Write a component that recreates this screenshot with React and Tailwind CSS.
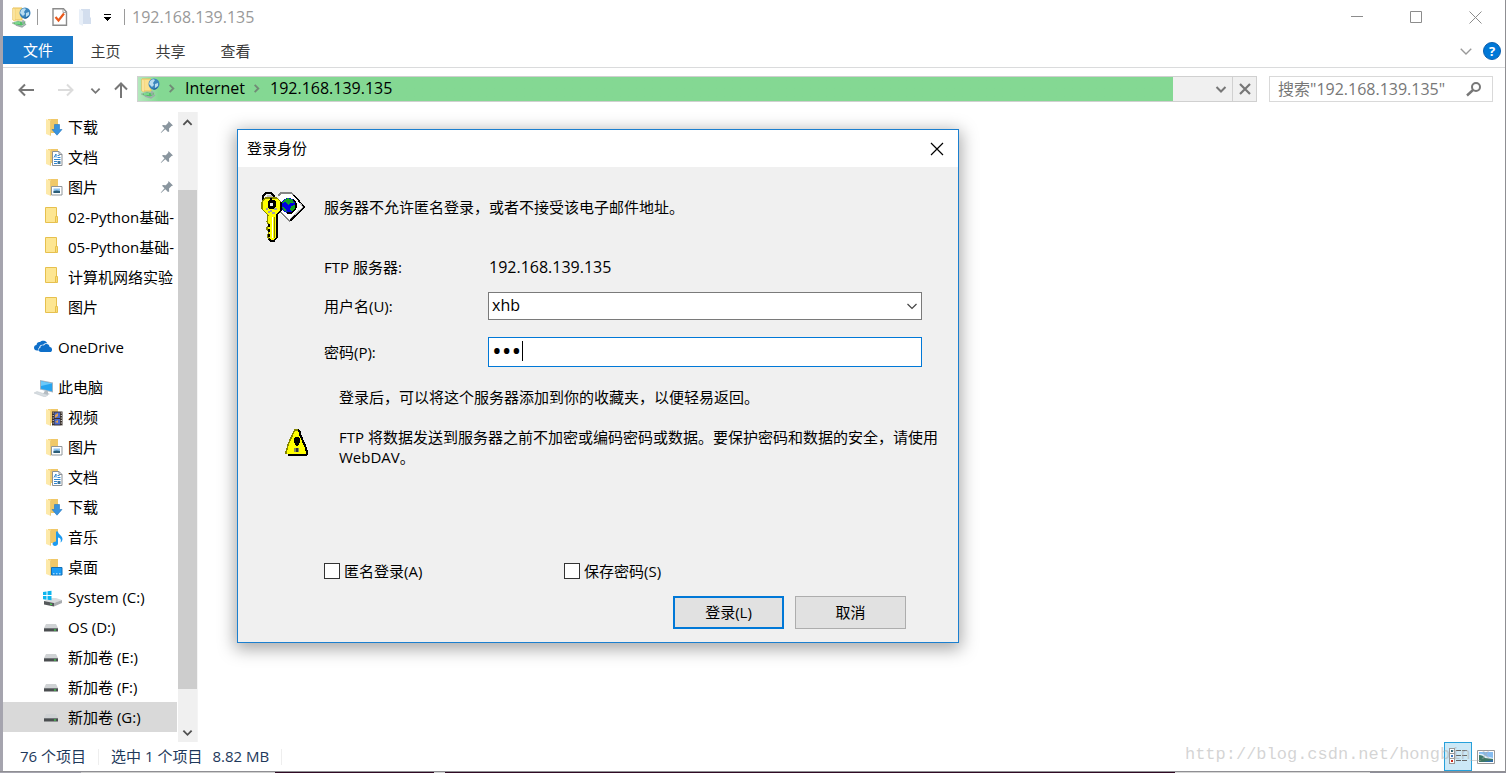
import React from "react";

const FONT = "font-['Open_Sans','Noto_Sans_CJK_SC',sans-serif]";

function NetFolderIcon() {
  return (
    <svg width="20" height="21" viewBox="0 0 20 21" className="shrink-0" aria-hidden="true">
      <path d="M2 1h9v12H2z" fill="#fbe08f" stroke="#e9bf55" />
      <path d="M2 1l2 1v12l-2-1z" fill="#fff0b8" stroke="#edc862" strokeWidth=".6" />
      <circle cx="14" cy="6" r="5.500" fill="#3b86bd" />
      <path d="M10 3q3-3 5-1l-2 3 1 2-2 2-3-3zM15 6l3-1v3l-3 2z" fill="#b9ddf0" />
      <path d="M9.500 9q5 4 9-1-2 4-5 3.600z" fill="#1c5d94" />
      <path d="M1 16l6-2 5 1 2-1v3l-4 2-5-1z" fill="#4fc265" stroke="#a9b8ad" strokeWidth=".7" />
      <path d="M12 13v4M5 18l6 2 4-3" fill="none" stroke="#9cabaa" strokeWidth="1.500" />
      <path d="M4 16l5 0" stroke="#a6eeb0" />
    </svg>
  );
}

function FolderBase() {
  return (
    <>
      <path d="M6 2h10v14H6z" fill="#f5d27a" />
      <path d="M9 2h7v14H9z" fill="#f0c869" />
      <path d="M4 2l5 2v15l-5-2z" fill="#fde9a9" />
      <path d="M8.500 4v14.500" stroke="#e9c467" strokeWidth=".8" />
    </>
  );
}

const OVERLAYS = {
  download: <path d="M12.500 7.500h5v5H20l-5 5.700-5-5.700h2.500z" fill="#3a93de" stroke="#2678c0" strokeWidth=".6" />,
  doc: (
    <>
      <path d="M10.500 4.500h6.500l3 3v11h-9.500z" fill="#fff" stroke="#8b9095" />
      <path d="M17 4.500v3h3" fill="none" stroke="#8b9095" />
      <path d="M12 10.500l2-3.500v3.500M15.500 8.500h2M15.500 10.500h3M12 12.500h6.500M12 14.500h3" fill="none" stroke="#3186cf" />
      <path d="M15.500 14h3v3h-3z" fill="#3d77a0" />
      <path d="M12 16.500h3" stroke="#3186cf" />
    </>
  ),
  picture: (
    <>
      <path d="M9.500 9.500h10.500v8.500H9.500z" fill="#fff" stroke="#90969b" />
      <path d="M11.500 11.500h6.500v4.500h-6.500z" fill="#8fc3ee" />
      <path d="M11.500 14q3-1 6.500 0v2h-6.500z" fill="#2c5d77" />
    </>
  ),
  video: (
    <>
      <path d="M10 4.500h10.500v14H10z" fill="#39312c" />
      <path d="M12.500 5.500h5.500v5.500h-5.500zM12.500 12h5.500v5.500h-5.500z" fill="#4a6ad0" />
      <path d="M13 8l3-2v3l-3 2zM13 15l3-2v3z" fill="#e0a050" />
      <path d="M11.200 5.500v13M19.300 5.500v13" stroke="#f4f1ea" strokeDasharray="1 1.500" />
    </>
  ),
  music: (
    <path d="M14 4.500h2c0 3 4.500 4 4.500 7.500 0 1.500-1 3-2 3.500 1-3 0-4.500-2.500-5v6c0 1.500-1.500 2.500-3 2.500s-2.500-1-2.500-2.200 1.500-2.300 3.500-2.300z" fill="#1e9bf0" />
  ),
  desktop: (
    <>
      <path d="M9.500 10.500h10.500v7.500H9.500z" fill="#1b9cf5" stroke="#1170b8" />
      <path d="M11 16.800h8" stroke="#d6efff" strokeDasharray="1.500 1.500" />
    </>
  ),
};

function SpecialFolder({ kind }) {
  return (
    <svg width="22" height="20" viewBox="0 0 22 20" className="shrink-0" aria-hidden="true">
      <FolderBase />
      {OVERLAYS[kind]}
    </svg>
  );
}

function PlainFolder() {
  return (
    <svg width="22" height="20" viewBox="0 0 22 20" className="shrink-0" aria-hidden="true">
      <path d="M3.500 .5h11v15h-11z" fill="#fde692" stroke="#e6c04e" />
      <path d="M13.500 9.500h2v6h-2z" fill="#fbdc74" stroke="#e6c04e" />
    </svg>
  );
}

function DriveIcon() {
  return (
    <svg width="22" height="20" viewBox="0 0 22 20" className="shrink-0" aria-hidden="true">
      <path d="M4 7h10l2 4H2z" fill="#cfd2d4" />
      <path d="M2 11h14v3.500H2z" fill="#4b4e50" />
      <path d="M2 11h14v1H2z" fill="#73777a" />
      <path d="M12 12.500h2v1h-2z" fill="#3cf04c" />
    </svg>
  );
}

function SystemDriveIcon() {
  return (
    <svg width="22" height="20" viewBox="0 0 22 20" className="shrink-0" aria-hidden="true">
      <path d="M2 14l8-3h4l6 2-8 3z" fill="#d9dbdd" />
      <path d="M2 14l10 2v3.500l-10-2z" fill="#55595b" />
      <path d="M12 16l8-3v3l-8 3.500z" fill="#a9adb0" />
      <path d="M8 17l2 .5" stroke="#46ef52" />
      <path d="M1 5l3.500-.6v3.700H1zM5.500 4.200L9.500 3.700v4.400h-4zM1 9h3.500v3.700L1 12.200zM5.500 9h4v4.300l-4-.5z" fill="#0db5ee" />
    </svg>
  );
}

function OneDriveIcon() {
  return (
    <svg width="20" height="20" viewBox="0 0 20 20" className="shrink-0" aria-hidden="true">
      <path d="M4.500 13.500H3C1 13.500 0 12.200 0 10.800 0 9.300 1 8.300 2.500 8.100 2.700 5.800 4.200 4.700 6 5c1-1 2.300-1.500 3.800-1.300 1.900.2 3 1.300 3.500 2.800-1.500-.4-3 .1-4 1.300-2.700-.5-4 1-4.100 3C4 11.300 3.900 12.700 4.500 13.500z" fill="#0e6fc9" />
      <path d="M7 15c-3 0-3.300-3.500-.7-3.900-.2-2.500 2-3.400 3.600-2.500C11.500 6 15.500 7 15.600 10c2.500-.2 3.400 3.800 1.200 5z" fill="#0e6fc9" />
    </svg>
  );
}

function ComputerIcon() {
  return (
    <svg width="20" height="20" viewBox="0 0 20 20" className="shrink-0" aria-hidden="true">
      <path d="M6 3l13 2.500v10L6 12.500z" fill="#9fb3c3" />
      <path d="M7 4.200l11 2.200v7.800L7 11.700z" fill="#27a4ef" />
      <path d="M7 4.200l11 2.200L7 9z" fill="#6bc9fa" />
      <path d="M11 13.500l3 .8v2l2 .8-3 .9-4-1z" fill="#b4bcc2" />
      <path d="M0 16l3-1.500 11 3.500-3 2z" fill="#d7dde1" stroke="#bcc5ca" strokeWidth=".5" />
    </svg>
  );
}

function Pin() {
  return (
    <svg width="14" height="14" viewBox="0 0 14 14" className="shrink-0" aria-hidden="true">
      <path d="M8.500 1l4.500 4.500-1.500.5-2.500 2.500.2 3L8 12 5.300 9.200 1 13l-.2-.5L4.500 8.300 2 5.800 3 5l2.800.2L8.200 2.700z" fill="#8a969f" />
    </svg>
  );
}

function Chevron({ d, size = 12, color = "#777", width = 2 }) {
  return (
    <svg width={size} height={size} viewBox="0 0 12 12" className="shrink-0" aria-hidden="true">
      <path d={d} fill="none" stroke={color} strokeWidth={width} />
    </svg>
  );
}
const DOWN = "M1.500 4l4.500 4.500L10.500 4";
const UP = "M1.500 8.500L6 4l4.500 4.500";
const RIGHT = "M4 2l4 4-4 4";

function TitleBar() {
  return (
    <header className="flex h-9 items-center pb-0.5">
      <div className="flex min-w-0 flex-1 items-center pl-2">
        <NetFolderIcon />
        <span className="ml-1.5 h-4 w-px bg-[#9a9a9a]" />
        <button aria-label="属性" className="ml-[14px]">
          <svg width="16" height="18" viewBox="0 0 16 18">
            <path d="M1 .8h10.500L14.500 4v13.200H1z" fill="#fff" stroke="#8b8b8b" strokeWidth="1.400" />
            <path d="M11 1v3.500h3.500" fill="none" stroke="#a5a5a5" />
            <path d="M3.500 9l3 3.500L12 5.500" fill="none" stroke="#e9591c" strokeWidth="2.200" />
          </svg>
        </button>
        <button aria-label="新建文件夹" className="ml-[11px]">
          <svg width="13" height="18" viewBox="0 0 13 18">
            <path d="M2 1h9v8l1 1v6H2z" fill="#d3deee" />
            <path d="M0 1l4 2v15l-4-2z" fill="#e8eff8" />
          </svg>
        </button>
        <button aria-label="自定义快速访问工具栏" className="ml-[11px]">
          <svg width="9" height="8" viewBox="0 0 9 8" shapeRendering="crispEdges">
            <path d="M1 1h7v1H1zM1 4h7v1H7v1H6v1H5v1H4V7H3V6H2V5H1z" fill="#000" />
          </svg>
        </button>
        <span className="ml-3 h-4 w-px bg-[#9a9a9a]" />
        <h1 className="ml-[7px] text-[16px] leading-5 text-[#999]">192.168.139.135</h1>
      </div>
      <div className="flex items-center gap-[46px] pr-[23px]">
        <button aria-label="最小化">
          <svg width="13" height="13" viewBox="0 0 13 13"><path d="M0 5.500h12" stroke="#8c8c8c" /></svg>
        </button>
        <button aria-label="最大化">
          <svg width="13" height="13" viewBox="0 0 13 13"><path d="M.5 .5h11v11H.5z" fill="none" stroke="#8c8c8c" /></svg>
        </button>
        <button aria-label="关闭">
          <svg width="13" height="13" viewBox="0 0 13 13"><path d="M.5 .5l12 12M12.500 .5l-12 12" stroke="#8c8c8c" /></svg>
        </button>
      </div>
    </header>
  );
}

function Ribbon() {
  return (
    <div className="flex h-8 items-start border-b border-[#dadbdc]">
      <button className="h-7 w-[70px] bg-[#1979ca] text-white">文件</button>
      {["主页", "共享", "查看"].map((t) => (
        <button key={t} className="h-[30px] w-[65px] text-[#3b3b3b]">{t}</button>
      ))}
      <div className="ml-auto flex h-[30px] items-center gap-2.5 pr-1">
        <button aria-label="展开功能区"><Chevron d={DOWN} size={14} color="#999" width={1.2} /></button>
        <button aria-label="帮助" className="h-[18px] w-[18px] rounded-full border border-[#0b5fae] bg-[#0078d7] text-[13px] leading-4 font-bold text-white">?</button>
      </div>
    </div>
  );
}

function NavArrow({ label, color, d }) {
  return (
    <button aria-label={label}>
      <svg width="16" height="16" viewBox="0 0 16 16"><path d={d} fill="none" stroke={color} strokeWidth="2" /></svg>
    </button>
  );
}

function AddressRow() {
  return (
    <div className="flex h-11 items-start pt-2">
      <div className="flex h-7 w-[134px] shrink-0 items-center pl-[15px]">
        <NavArrow label="后退" color="#777" d="M16 8H1.500M7 2.500L1.500 8L7 13.500" />
        <span className="ml-6 flex"><NavArrow label="前进" color="#dcdcdc" d="M0 8h14.500M9 2.500L14.500 8L9 13.500" /></span>
        <button aria-label="最近位置" className="ml-4"><Chevron d={DOWN} size={11} /></button>
        <span className="ml-3 flex"><NavArrow label="上移" color="#777" d="M8 16V1.500M2 7.500l6-6 6 6" /></span>
      </div>
      <nav aria-label="地址" className="flex h-[26px] min-w-0 flex-1 border border-[#d0d0d0] bg-[#f0f0f0]">
        <div className="flex min-w-0 flex-1 items-center bg-linear-to-r from-[#b4e8bd] from-0% via-[#84d893] via-2% to-[#84d893] pb-0.5 pl-0.5 text-[16px]">
          <NetFolderIcon />
          <span className="ml-1.5 flex"><Chevron d={RIGHT} color="#718a76" size={11} /></span>
          <a href="#internet" className="ml-2 text-black">Internet</a>
          <span className="ml-1.5 flex"><Chevron d={RIGHT} color="#718a76" size={11} /></span>
          <a href="#server" className="ml-2 text-black">192.168.139.135</a>
        </div>
        <button aria-label="历史地址" className="flex w-[59px] items-center justify-end pr-[5px]"><Chevron d={DOWN} /></button>
        <button aria-label="停止" className="flex w-6 items-center justify-center border-l border-[#d0d0d0]">
          <svg width="12" height="12" viewBox="0 0 12 12"><path d="M1 1l10 10M11 1L1 11" stroke="#777" strokeWidth="2.200" /></svg>
        </button>
      </nav>
      <label className="mr-3 ml-3 flex h-[26px] w-[224px] items-center border border-[#d9d9d9] pr-2.5 pl-2">
        <input aria-label="搜索" placeholder='搜索"192.168.139.135"' className="min-w-0 flex-1 text-[16px] text-black outline-none placeholder:text-[#777]" />
        <svg width="16" height="16" viewBox="0 0 16 16" aria-hidden="true">
          <circle cx="10" cy="6" r="4" fill="none" stroke="#777" strokeWidth="2" />
          <path d="M7 9L1 14.500" stroke="#777" strokeWidth="2.400" />
        </svg>
      </label>
    </div>
  );
}

const QUICK = [
  { text: "下载", icon: <SpecialFolder kind="download" />, pin: true },
  { text: "文档", icon: <SpecialFolder kind="doc" />, pin: true },
  { text: "图片", icon: <SpecialFolder kind="picture" />, pin: true },
  { text: "02-Python基础-", icon: <PlainFolder /> },
  { text: "05-Python基础-", icon: <PlainFolder /> },
  { text: "计算机网络实验", icon: <PlainFolder /> },
  { text: "图片", icon: <PlainFolder /> },
];

const COMPUTER = [
  { text: "视频", icon: <SpecialFolder kind="video" /> },
  { text: "图片", icon: <SpecialFolder kind="picture" /> },
  { text: "文档", icon: <SpecialFolder kind="doc" /> },
  { text: "下载", icon: <SpecialFolder kind="download" /> },
  { text: "音乐", icon: <SpecialFolder kind="music" /> },
  { text: "桌面", icon: <SpecialFolder kind="desktop" /> },
  { text: "System (C:)", icon: <SystemDriveIcon /> },
  { text: "OS (D:)", icon: <DriveIcon /> },
  { text: "新加卷 (E:)", icon: <DriveIcon /> },
  { text: "新加卷 (F:)", icon: <DriveIcon /> },
  { text: "新加卷 (G:)", icon: <DriveIcon />, selected: true },
];

function TreeRow({ item }) {
  return (
    <li className={item.selected ? "bg-[#d9d9d9]" : ""}>
      <a href="#item" className="flex h-[30px] items-center gap-1 overflow-hidden pl-[39px] whitespace-nowrap text-black">
        {item.icon}
        <span>{item.text}</span>
        {item.pin && <span className="mr-[3px] ml-auto"><Pin /></span>}
      </a>
    </li>
  );
}

function RootRow({ icon, text }) {
  return (
    <a href="#root-item" className="mt-2.5 flex h-[30px] items-center gap-1 pl-[31px] text-black">
      {icon}
      <span>{text}</span>
    </a>
  );
}

function Sidebar() {
  return (
    <aside className="flex w-[195px] shrink-0 border-r border-[#f4f4f4]">
      <nav aria-label="导航窗格" className="w-[174px] pb-2.5">
        <ul>{QUICK.map((it, i) => <TreeRow key={i} item={it} />)}</ul>
        <RootRow icon={<OneDriveIcon />} text="OneDrive" />
        <RootRow icon={<ComputerIcon />} text="此电脑" />
        <ul>{COMPUTER.map((it, i) => <TreeRow key={i} item={it} />)}</ul>
      </nav>
      <div className="ml-px flex w-[19px] flex-col items-center bg-[#f0f0f0]">
        <button aria-label="向上滚动" className="flex h-5 items-center"><Chevron d={UP} size={11} color="#505050" /></button>
        <div className="flex w-full flex-1 flex-col pt-[58px] pb-[33px]">
          <div className="w-full flex-1 bg-[#cdcdcd]" />
        </div>
        <button aria-label="向下滚动" className="flex h-5 items-center"><Chevron d={DOWN} size={11} color="#505050" /></button>
      </div>
    </aside>
  );
}

function StatusBar() {
  return (
    <footer className="relative flex h-[29px] items-center pl-[17px] text-[#1e395b]">
      <span>76 个项目</span>
      <span className="ml-3 h-4 w-px bg-[#eee]" />
      <span className="ml-3">选中 1 个项目</span>
      <span className="ml-2.5">8.82 MB</span>
      <span className="ml-3 h-4 w-px bg-[#eee]" />
      <div className="ml-auto flex items-center gap-[5px] self-stretch pr-2.5">
        <button aria-label="详细信息" className="flex h-full w-7 items-center justify-center border border-[#26a0da] bg-[#cce8f6]">
          <svg width="18" height="17" viewBox="0 0 18 17" shapeRendering="crispEdges">
            <path d="M.5 .5h5v5h-5zM.5 5.500h5v5h-5zM.5 10.500h5v5h-5z" fill="#fff" stroke="#979797" />
            <path d="M2 2h2v2H2z" fill="#2f5f70" /><path d="M2 7h2v2H2z" fill="#3c78c0" /><path d="M2 12h2v2H2z" fill="#c92a1c" />
            <path d="M7 2.500h5M13 2.500h5M7 7.500h5M13 7.500h5M7 12.500h5M13 12.500h5" stroke="#666" />
          </svg>
        </button>
        <button aria-label="大缩略图">
          <svg width="18" height="14" viewBox="0 0 18 14">
            <path d="M.5 .5h17v13H.5z" fill="#fff" stroke="#999" />
            <path d="M2 2h14v10H2z" fill="#86bdf0" />
            <path d="M2 4q3-1 5 1t6 2l3 1v2H2z" fill="#dcedf8" />
            <path d="M2 5q4 0 6 3l8 1v3H2z" fill="#3e7865" />
            <path d="M6 12l10-2v2z" fill="#2c6cab" />
          </svg>
        </button>
      </div>
      <span className="pointer-events-none absolute right-3.5 bottom-1.5 font-['Liberation_Mono',monospace] text-[17px] leading-5 text-[#aaa]/50">
        http://blog.csdn.net/hongbin_x
      </span>
    </footer>
  );
}

function KeyIcon() {
  return (
    <svg width="46" height="52" viewBox="0 0 46 52" shapeRendering="crispEdges" aria-hidden="true">
      <path d="M19 2h12l13 14-14 15-11-9z" fill="#fff" />
      <path d="M18 5l3-3h10l5 4" fill="none" stroke="#858585" strokeWidth="1.500" />
      <path d="M34 4l10 12-14 14" fill="none" stroke="#000" strokeWidth="1.600" />
      <path d="M30 30l-10-9" fill="none" stroke="#858585" strokeWidth="1.500" />
      <path d="M40 12l3 4-13 12" fill="none" stroke="#c0c0c0" />
      <circle cx="28.500" cy="14.500" r="7.500" fill="#0000e0" />
      <path d="M24 9l4-2 5 2 1 3h-3l-3 2-3-3-3 1zM31 15l4-1v4l-3 3-2-2zM22 16l3 1 2 4-3-1z" fill="#12a322" />
      <path d="M33 8l3 4v5l-4 5h-5" fill="none" stroke="#000" strokeWidth="1.300" />
      <path d="M3 10V5l3-3h5l3 3v5" fill="none" stroke="#000" strokeWidth="2" />
      <path d="M7 5h4l2 2" fill="none" stroke="#c0c0c0" strokeWidth="2" />
      <path d="M5 7h12l4 4v8l-4 5v22l-3 4h-3l-3-3v-4l1-2-2-2v-3l2-2-2-3 1-7-6-6v-7z" fill="#ffff00" stroke="#858500" strokeWidth="1.300" />
      <path d="M21 11v8l-4 5v22l-3 4h-3l-2-2" fill="none" stroke="#000" strokeWidth="1.500" />
      <path d="M14.500 26v21" stroke="#858500" strokeWidth="1.200" />
      <path d="M12.500 26v21" stroke="#fff" />
      <path d="M9 33v3M9 38v3M9 43v3" stroke="#000" strokeWidth="1.500" />
      <path d="M9 9h5l2 2v5l-3 2H9l-1-3v-4z" fill="#000" />
      <path d="M10 12h3v3h-3z" fill="#efefef" />
      <path d="M11 7v5" stroke="#000" strokeWidth="2" />
      <path d="M6 18h2M10 20h2M14 18h3M8 21h2M12 22h3" stroke="#a0a0a0" strokeWidth="1.500" />
    </svg>
  );
}

function WarningIcon() {
  return (
    <svg width="24" height="27" viewBox="0 0 24 27" shapeRendering="crispEdges" aria-hidden="true">
      <path d="M9 1h5l8 19v4l-1 1H1v-5z" fill="#ffff00" />
      <path d="M13 1l2 2v3l2 3 1 4 2 3 1 4 1 3v2l-1 1H3" fill="none" stroke="#000" strokeWidth="2" />
      <path d="M9 1h4M9 2l-2 5-2 4-2 5-1 4-1 3v2" fill="none" stroke="#858500" strokeWidth="1.500" />
      <path d="M10 8h3l2 2v3l-2 4h-2l-2-4v-3z" fill="#000" />
      <path d="M9 19h5v4H9z" fill="#8b8b5c" />
      <path d="M11 19h2v4h-2z" fill="#333" />
    </svg>
  );
}

function LoginDialog() {
  return (
    <section role="dialog" aria-label="登录身份" className="absolute top-[129px] left-[237px] w-[722px] border border-[#1b7fcf] bg-[#f0f0f0] text-black shadow-[0_4px_16px_2px_rgba(0,0,0,0.35)]">
      <div className="flex h-[37px] items-center justify-between bg-white pr-3.5 pl-[9px]">
        <h2>登录身份</h2>
        <button aria-label="关闭对话框">
          <svg width="14" height="14" viewBox="0 0 14 14"><path d="M1 1l12 12M13 1L1 13" stroke="#000" strokeWidth="1.200" /></svg>
        </button>
      </div>
      <form className="pb-[13px] leading-5" onSubmit={(e) => e.preventDefault()}>
        <div className="flex h-[90px] pt-6 pl-[22px]">
          <div className="w-16 shrink-0"><KeyIcon /></div>
          <p className="pt-1.5">服务器不允许匿名登录，或者不接受该电子邮件地址。</p>
        </div>
        <div className="grid grid-cols-[164px_1fr] items-center pr-9 pl-[86px]">
          <span>FTP 服务器:</span>
          <span className="pl-px text-[16px]">192.168.139.135</span>
          <label htmlFor="user" className="mt-[15px]">用户名(U):</label>
          <div className="relative mt-[15px]">
            <select id="user" defaultValue="xhb" className="block h-7 w-full appearance-none rounded-none border border-[#7a7a7a] bg-white pb-0.5 pl-[3px] text-[16px] leading-5 outline-none">
              <option>xhb</option>
            </select>
            <span className="pointer-events-none absolute top-2 right-1"><Chevron d={DOWN} color="#444" width={1.2} /></span>
          </div>
          <label htmlFor="pass" className="mt-[17px]">密码(P):</label>
          <div className="relative mt-[17px]">
            <input id="pass" type="password" defaultValue="xhb" className="block h-[30px] w-full border border-[#0078d7] bg-white pb-1 pl-[3px] text-[26px] caret-transparent outline-none" />
            <span className="pointer-events-none absolute top-1 left-[34px] h-5 w-px bg-black" />
          </div>
        </div>
        <p className="mt-5 pl-[101px]">登录后，可以将这个服务器添加到你的收藏夹，以便轻易返回。</p>
        <div className="mt-5 flex pr-3 pl-[47px]">
          <div className="w-[54px] shrink-0 pt-0.5"><WarningIcon /></div>
          <p>FTP 将数据发送到服务器之前不加密或编码密码或数据。要保护密码和数据的安全，请使用 WebDAV。</p>
        </div>
        <div className="mt-[94px] grid grid-cols-[240px_1fr] pl-[86px]">
          {["匿名登录(A)", "保存密码(S)"].map((t) => (
            <label key={t} className="flex items-center gap-1">
              <input type="checkbox" className="h-4 w-4 appearance-none border border-[#333] bg-white" />
              {t}
            </label>
          ))}
        </div>
        <div className="mt-[15px] flex justify-end gap-[11px] pr-[52px]">
          <button type="submit" className="h-[33px] w-[111px] border-2 border-[#0078d7] bg-[#e1e1e1] pb-0.5">登录(L)</button>
          <button type="button" className="h-[33px] w-[111px] border border-[#adadad] bg-[#e1e1e1] pb-0.5">取消</button>
        </div>
      </form>
    </section>
  );
}

export default function App() {
  return (
    <div lang="zh-CN" className={`relative flex min-h-screen flex-col bg-white text-[15px] ${FONT}`}>
      <div className="flex flex-1 flex-col border-r border-l-3 border-r-[#8f8f93] border-l-[#a5a4ae]">
        <TitleBar />
        <Ribbon />
        <AddressRow />
        <main className="flex flex-1">
          <Sidebar />
          <div className="flex-1" />
        </main>
        <StatusBar />
      </div>
      <div className="flex h-0.5 border-t border-[#8f8f93]">
        <span className="w-[81px] bg-[#a5a4ae]" />
        <span className="w-[194px] bg-[#d0d0d0]" />
        <span className="w-[159px] bg-[#300a24]" />
        <span className="w-[11px] bg-[#d0d0d0]" />
        <span className="flex-1 bg-[#300a24]" />
        <span className="w-[195px] bg-[#d6d6d6]" />
        <span className="w-[136px] bg-[#8f8f9a]" />
      </div>
      <LoginDialog />
    </div>
  );
}
